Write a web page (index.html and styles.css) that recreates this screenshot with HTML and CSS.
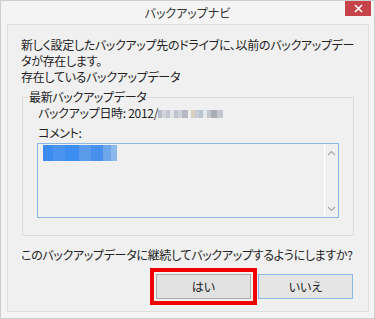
FILE: index.html
```html
<!DOCTYPE html>
<html lang="ja">
<head>
<meta charset="utf-8">
<link rel="stylesheet" href="styles.css">
</head>
<body>
<div class="window">
  <div class="titlebar">
    <div class="title">バックアップナビ</div>
    <div class="close">
      <svg width="9" height="9" viewBox="0 0 9 9"><path d="M1 1 L8 8 M8 1 L1 8" stroke="#fff" stroke-width="1.6" fill="none"/></svg>
    </div>
  </div>
  <div class="panel">
    <p class="msg">新しく設定したバックアップ先のドライブに、以前のバックアップデー<br>タが存在します。</p>
    <p class="msg">存在しているバックアップデータ</p>
    <fieldset class="group">
      <legend class="legend">最新バックアップデータ</legend>
      <div class="group-body">
        <div class="row">バックアップ日時: 2012/<span class="mosaic m1"></span><span class="mosaic m2"></span></div>
        <div class="row">コメント:</div>
        <div class="comment">
          <div class="comment-text"><span class="selection"></span></div>
          <div class="scrollbar">
            <svg width="9" height="6" viewBox="0 0 9 6"><path d="M1 5 L4.5 1.5 L8 5" stroke="#a8a8a8" stroke-width="1.2" fill="none"/></svg>
            <svg width="9" height="6" viewBox="0 0 9 6"><path d="M1 1 L4.5 4.5 L8 1" stroke="#a8a8a8" stroke-width="1.2" fill="none"/></svg>
          </div>
        </div>
      </div>
    </fieldset>
    <p class="question">このバックアップデータに継続してバックアップするようにしますか?</p>
    <div class="buttons">
      <button class="btn btn-yes">はい</button>
      <button class="btn btn-no">いいえ</button>
    </div>
  </div>
</div>
</body>
</html>
```
FILE: styles.css
```css
* { box-sizing: border-box; }
html, body { margin: 0; padding: 0; }
body {
  width: 375px;
  height: 319px;
  background: #f3f3f3;
  font-family: "Noto Sans CJK JP", "Noto Sans", sans-serif;
  font-feature-settings: "palt";
  font-size: 12px;
  letter-spacing: -0.3px;
  color: #222;
}
.window {
  width: 375px;
  height: 319px;
  border: 1px solid #cfcfcf;
  background: #f4f4f4;
  display: flex;
  flex-direction: column;
}
.titlebar {
  height: 23px;
  display: grid;
  grid-template-columns: 1fr auto 1fr;
}
.title {
  grid-column: 2;
  line-height: 24px;
  font-size: 12px;
  color: #333;
  letter-spacing: 0;
}
.close {
  grid-column: 3;
  justify-self: end;
  width: 26px;
  height: 15px;
  margin-right: 3px;
  background: #c7434a;
  display: flex;
  align-items: center;
  justify-content: center;
}
.panel {
  flex: 1;
  margin: 0 5px 6px 6px;
  border: 1px solid #dfdfdf;
  background: #f0f0f0;
  padding: 12px 14px 10px 13px;
}
.msg {
  margin: 0;
  line-height: 16px;
  white-space: nowrap;
}
.group {
  margin: 4px 0 0 1px;
  padding: 0 0 17px 5px;
  border: 1px solid #dcdcdc;
  min-width: 0;
}
.legend {
  padding: 0 1px;
  line-height: 16px;
}
.group-body {
  padding-left: 10px;
}
.row {
  line-height: 16px;
  margin-bottom: 4px;
  display: flex;
  align-items: center;
}
.mosaic {
  display: inline-block;
  height: 8px;
  margin-top: 2px;
}
.m1 {
  width: 30px;
  background: linear-gradient(90deg, #b8bcc6 0 4px, #d4d6dc 4px 8px, #c3c6ce 8px 12px, #e2e3e6 12px 16px, #bcc3cf 16px 20px, #cfd2d8 20px 24px, #b4b9c3 24px 30px);
}
.m2 {
  width: 32px;
  margin-left: 3px;
  background: linear-gradient(90deg, #d9cdbf 0 4px, #c9ccd2 4px 8px, #b9c5cf 8px 12px, #e6e7e9 12px 16px, #c2c5cc 16px 20px, #a9adb6 20px 26px, #c5c8cf 26px 32px);
}
.comment {
  margin: -2px 0 0 -1px;
  width: 302px;
  height: 75px;
  border: 1px solid #8ab6e8;
  background: #f0f0f0;
  display: flex;
}
.comment-text {
  flex: 1;
  padding: 1px 0 0 5px;
}
.selection {
  display: block;
  width: 74px;
  height: 16px;
  background: linear-gradient(90deg, #3c8cf0 0 10px, #4a93ef 10px 22px, #3d8ef1 22px 36px, #5a9ce9 36px 48px, #4790ee 48px 60px, #6ea6ea 60px 68px, #8db8ec 68px 74px);
}
.scrollbar {
  width: 14px;
  border-left: 1px solid #ffffff;
  display: flex;
  flex-direction: column;
  justify-content: space-between;
  align-items: center;
  padding: 6px 0 5px;
}
.scrollbar svg { display: block; }
.question {
  margin: 11px 0 0;
  line-height: 16px;
  white-space: nowrap;
}
.buttons {
  margin-top: 11px;
  display: flex;
  justify-content: flex-end;
  gap: 7px;
  padding-right: 1px;
}
.btn {
  width: 95px;
  height: 25px;
  font-family: inherit;
  font-feature-settings: "palt";
  font-size: 12px;
  color: #222;
  background: #e1e1e1;
  border: 1px solid #adadad;
  border-radius: 0;
  padding: 0;
}
.btn-yes {
  outline: 4px solid #f00000;
  outline-offset: 2px;
}
.btn-no {
  border-color: #8ab6e8;
  background: #e5e5e5;
}
```
